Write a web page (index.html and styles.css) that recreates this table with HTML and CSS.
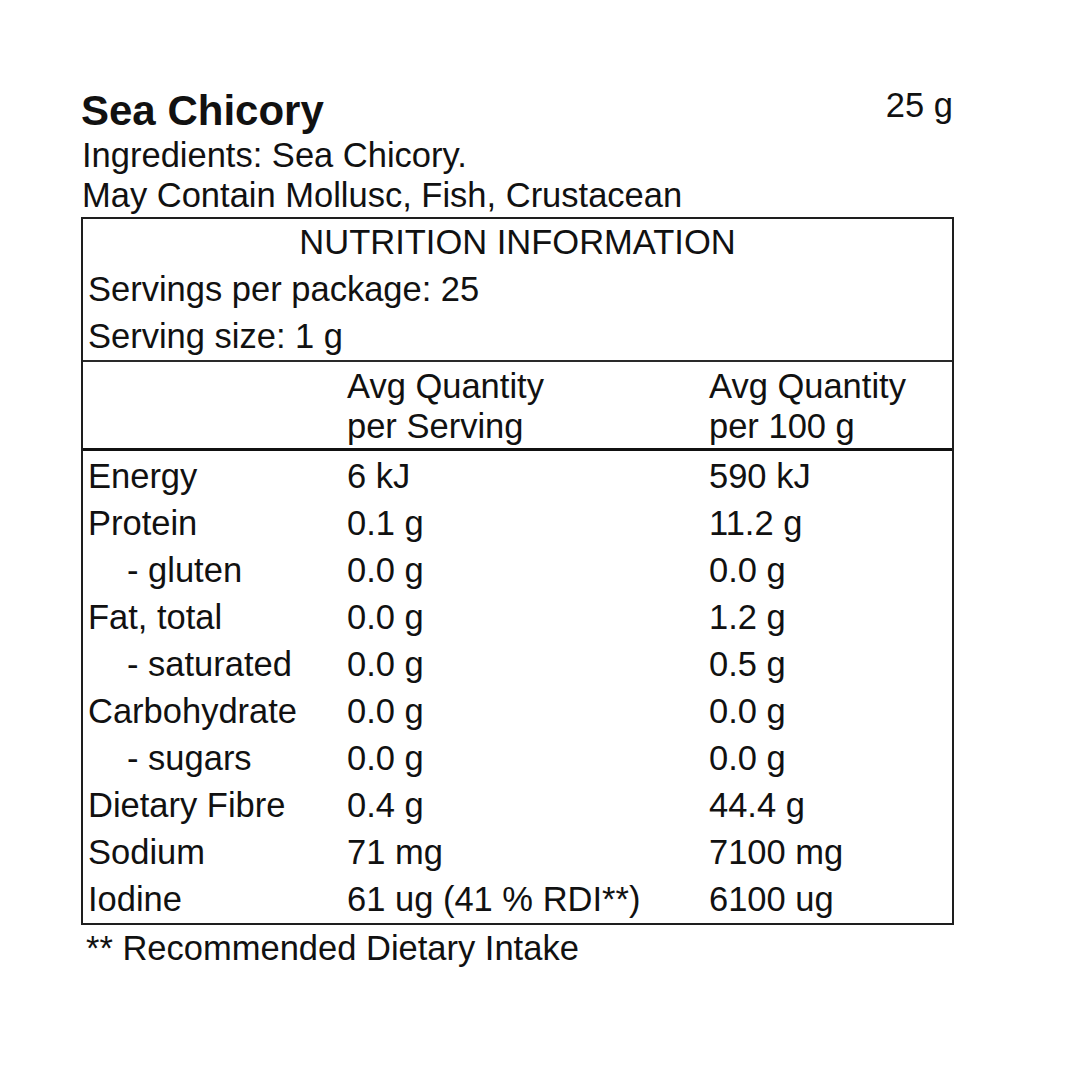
FILE: index.html
```html
<!DOCTYPE html>
<html lang="en">
<head>
<meta charset="utf-8">
<title>Sea Chicory – Nutrition Information</title>
<link rel="stylesheet" href="styles.css">
</head>
<body>
<div class="label">
  <div class="title-row">
    <h1 class="title">Sea Chicory</h1>
    <span class="weight">25 g</span>
  </div>
  <p class="line">Ingredients: Sea Chicory.</p>
  <p class="line">May Contain Mollusc, Fish, Crustacean</p>
  <div class="panel">
    <div class="panel-head">
      <div class="panel-title">NUTRITION INFORMATION</div>
      <div class="panel-row">Servings per package: 25</div>
      <div class="panel-row">Serving size: 1 g</div>
    </div>
    <div class="col-head">
      <div></div>
      <div>Avg Quantity<br>per Serving</div>
      <div>Avg Quantity<br>per 100 g</div>
    </div>
    <div class="rows">
      <div class="row"><div>Energy</div><div>6 kJ</div><div>590 kJ</div></div>
      <div class="row"><div>Protein</div><div>0.1 g</div><div>11.2 g</div></div>
      <div class="row"><div class="sub">- gluten</div><div>0.0 g</div><div>0.0 g</div></div>
      <div class="row"><div>Fat, total</div><div>0.0 g</div><div>1.2 g</div></div>
      <div class="row"><div class="sub">- saturated</div><div>0.0 g</div><div>0.5 g</div></div>
      <div class="row"><div>Carbohydrate</div><div>0.0 g</div><div>0.0 g</div></div>
      <div class="row"><div class="sub">- sugars</div><div>0.0 g</div><div>0.0 g</div></div>
      <div class="row"><div>Dietary Fibre</div><div>0.4 g</div><div>44.4 g</div></div>
      <div class="row"><div>Sodium</div><div>71 mg</div><div>7100 mg</div></div>
      <div class="row"><div>Iodine</div><div>61 ug (41 % RDI**)</div><div>6100 ug</div></div>
    </div>
  </div>
  <p class="foot">** Recommended Dietary Intake</p>
</div>
</body>
</html>
```

FILE: styles.css
```css
html, body {
  margin: 0;
  padding: 0;
  background: #ffffff;
}

body {
  font-family: "Liberation Sans", Arial, sans-serif;
  color: #111111;
  font-size: 34.5px;
}

.label {
  width: 873px;
  padding: 87px 0 0 81px;
}

.title-row {
  display: flex;
  justify-content: space-between;
  align-items: flex-start;
  height: 48px;
}

.title {
  margin: 0;
  font-size: 42px;
  font-weight: 700;
  line-height: 48px;
}

.weight {
  line-height: 36px;
  margin-right: 1px;
}

.line {
  margin: 0;
  line-height: 40px;
  padding-left: 1px;
}

.panel {
  margin-top: 2px;
  border: 2px solid #1e1e1e;
  border-right-width: 2.5px;
}

.panel-head {
  border-bottom: 2px solid #2a2a2a;
  padding: 0 5px 0 5px;
}

.panel-title {
  text-align: center;
  line-height: 47px;
}

.panel-row {
  line-height: 47px;
}

.col-head,
.row {
  display: grid;
  grid-template-columns: 259px 362px 1fr;
  padding-left: 5px;
}

.col-head {
  line-height: 40px;
  padding-top: 4px;
  padding-bottom: 2px;
  border-bottom: 3px solid #111111;
}

.rows {
  padding-top: 2px;
}

.row {
  line-height: 47px;
  white-space: nowrap;
}

.sub {
  padding-left: 39px;
}

.foot {
  margin: 3px 0 0 0;
  padding-left: 5px;
  line-height: 40px;
}
```
